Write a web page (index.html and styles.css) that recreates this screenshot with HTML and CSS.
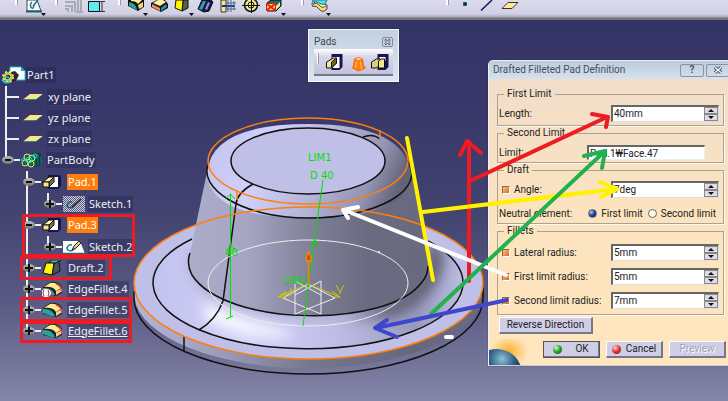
FILE: index.html
```html
<!DOCTYPE html>
<html lang="en">
<head>
    <meta charset="UTF-8">
    <meta name="viewport" content="width=device-width, initial-scale=1.0">
    <title>Part1 - Drafted Filleted Pad</title>
    <link rel="stylesheet" href="styles.css">
</head>
<body>

    <!-- shared icons -->
    <svg class="defs" aria-hidden="true">
        <symbol id="i-plane" viewBox="0 0 22 16">
            <path d="M1 10.5 L8 5 H21 L14 10.5 Z" fill="#f5e88a"/>
            <path d="M1 11 H14 L21 5.500" fill="none" stroke="#1d5a6b" stroke-width="1"/>
        </symbol>
        <symbol id="i-body" viewBox="0 0 22 16">
            <path d="M11 1 L19 1 L22 6 L19 13 L14 15 L8 12 Z" fill="#0a3a3c"/>
            <path d="M14 2 V14 M17 2 V13 M20 4 V11" stroke="#0b8f83" stroke-width="1"/>
            <circle cx="8" cy="8" r="6" fill="#0c6470"/>
            <g fill="none" stroke="#f4ee2c" stroke-width="1">
                <circle cx="6" cy="5" r="3"/><circle cx="11" cy="6" r="3"/>
                <circle cx="4" cy="11" r="3"/><circle cx="10" cy="12" r="3"/>
            </g>
            <g fill="none" stroke="#18d7e0" stroke-width="1">
                <circle cx="8" cy="8" r="3"/><circle cx="14" cy="4" r="2"/><circle cx="2" cy="8" r="1.500"/>
            </g>
        </symbol>
        <symbol id="i-pad" viewBox="0 0 22 16">
            <path d="M6 1 H17 L19 2 V12 L16 15 H6 Z" fill="#17144f"/>
            <path d="M7 3 H16 V13 H7 Z" fill="#fff"/>
            <path d="M1 8 L7 3 H12 L7 8 Z" fill="#fbf3a5" stroke="#111" stroke-width="1"/>
            <path d="M7 8 L12 3 V8 L7 13 Z" fill="#777239" stroke="#111" stroke-width="1"/>
            <path d="M1 8 H7 V13 H1 Z" fill="#f3e88c" stroke="#111" stroke-width="1"/>
        </symbol>
        <symbol id="i-sketch" viewBox="0 0 22 16">
            <path d="M0 2 H17 L22 15 H0 Z" fill="#fff"/>
            <path d="M0 14.500 H22" stroke="#1b6f7b" stroke-width="1.500"/>
            <path d="M9 6 C5 5 3 9 5 11 C8 13 12 11 12 8" fill="none" stroke="#1b7f86" stroke-width="1.500"/>
            <path d="M9 11 L11 7 L16 2 L18 4 L13 9 Z" fill="#d9d38a" stroke="#222"/>
        </symbol>
        <symbol id="i-sketch-hidden" viewBox="0 0 22 16">
            <path d="M0 0 H22 V16 H0 Z" fill="#5d5d86"/>
            <path d="M0 .5 H22 M0 2.500 H22 M0 4.500 H22 M0 6.500 H22 M0 8.500 H22 M0 10.500 H22 M0 12.500 H22 M0 14.500 H22" stroke="#c9c9d8" stroke-dasharray="1 1"/>
            <path d="M1 1.500 H22 M1 3.500 H22 M1 5.500 H22 M1 7.500 H22 M1 9.500 H22 M1 11.500 H22 M1 13.500 H22 M1 15.500 H22" stroke="#c9c9d8" stroke-dasharray="1 1"/>
            <path d="M9 6 C5 5 3 9 5 11 C8 13 12 11 12 8" fill="none" stroke="#2a5f70" stroke-width="1.500"/>
            <path d="M9 11 L18 3" stroke="#333" stroke-width="2"/>
        </symbol>
        <symbol id="i-draft" viewBox="0 0 22 16">
            <path d="M6 3 L10 0 H19 L16 3 Z" fill="#39c7d3" stroke="#111"/>
            <path d="M12 4 L17 1 L18 11 L10 15 Z" fill="#4d5260" stroke="#111"/>
            <path d="M4 3 H12 L10 15 L1 13 Z" fill="#fff500" stroke="#111"/>
        </symbol>
        <symbol id="i-fillet" viewBox="0 0 22 16">
            <path d="M1 6 L8 1 Q17 0 20 6 V12 L14 15 L1 12 Z" fill="#222"/>
            <path d="M1 7 Q10 6 13 14 L9 14 L1 11 Z" fill="#2aa39e"/>
            <path d="M2 6 L8 2 Q15 1 19 7 L14 10 Q11 5 2 6 Z" fill="#ffe991"/>
            <path d="M14 3 Q19 4 20 11" fill="none" stroke="#e0503c" stroke-width="1.500"/>
            <path d="M14 10 L19 8 V11 L14 14 Z" fill="#f3c98c"/>
        </symbol>
    </svg>

    <header class="toolbar">
        <div class="tools">
            <button type="button" aria-label="Sketcher">
                <svg viewBox="0 0 23 17"><path d="M4 0 H14 L18 11 H4 Z" fill="#fff" stroke="#445" /><path d="M3 11.500 H19" stroke="#17606f" stroke-width="2"/><path d="M9 2 C6 5 8 9 10 8 L12 3 M10 6 L15 0" fill="none" stroke="#177c88" stroke-width="1.500"/><path d="M18 13 h5 l-2.500 3 z" fill="#111"/></svg>
            </button>
        </div>
        <div class="tools">
            <button type="button" aria-label="Exit workbench">
                <svg viewBox="0 0 23 17"><path d="M2 2 H12 V12 M2 6 H9 V12 M2 9 H5 V12 M15 0 V12 M18 0 V12 M13 12 H20" fill="none" stroke="#aaa9b6" stroke-width="2"/></svg>
            </button>
            <button type="button" aria-label="Constraint">
                <svg viewBox="0 0 23 17"><path d="M2.500 1.500 H13.500 V11.500 H2.500 Z" fill="#5fe9f2" stroke="#111"/><path d="M16 1 V12 M14 1.500 H19 M14 11.500 H19" stroke="#333"/></svg>
            </button>
        </div>
        <div class="tools">
            <button type="button" aria-label="Edge fillet">
                <svg viewBox="0 0 23 17"><path d="M2 0 H18 V7 L12 11 L2 6 Z" fill="#111"/><path d="M3 2 Q10 3 11 10 L3 6 Z" fill="#2aa39e"/><path d="M5 0 H16 L12 4 Q10 1 5 1 Z" fill="#fff0a0"/><path d="M12 5 L17 2 V7 L13 9 Z" fill="#f7d27c"/><path d="M17 13 h5 l-2.500 3 z" fill="#111"/></svg>
            </button>
            <button type="button" aria-label="Chamfer">
                <svg viewBox="0 0 23 17"><path d="M2 3 L8 0 H16 L19 4 V8 L12 12 L2 7 Z" fill="#111"/><path d="M3 4 L11 8 V11 L3 7 Z" fill="#f58a5c"/><path d="M4 3 L9 0 H14 L17 2 L11 6 Z" fill="#fff0a0"/><path d="M12 8 L17 4 L18 7 L12 11 Z" fill="#2d89b5"/></svg>
            </button>
            <button type="button" aria-label="Draft angle">
                <svg viewBox="0 0 23 17"><path d="M11 0 H16 V8 L10 11 Z" fill="#5a5f48" stroke="#111"/><path d="M4 0 H11 L10 11 L3 8 Z" fill="#fff500" stroke="#111"/><path d="M17 13 h5 l-2.500 3 z" fill="#111"/></svg>
            </button>
            <button type="button" aria-label="Shell">
                <svg viewBox="0 0 23 17"><path d="M3 9 L7 0 H16 L18 2 L14 11 L9 12 Z" fill="#17144f" stroke="#111"/><path d="M4 9 L8 1 H11 L7 10 Z" fill="#2aa3a8"/><path d="M10 9 L13 2 L15 3 L12 10 Z" fill="#8b90c8"/></svg>
            </button>
            <button type="button" aria-label="Thickness">
                <svg viewBox="0 0 23 17"><path d="M3 0 H8 V12 H3 Z" fill="#f3e88c" stroke="#333"/><path d="M4 6 H17" stroke="#1c2f8f" stroke-width="2"/><path d="M10 0 V12 M13 0 V12 M16 1 V10 M8 3 H18 M8 9 H18" stroke="#4b6f86"/></svg>
            </button>
            <button type="button" aria-label="Thread">
                <svg viewBox="0 0 23 17"><circle cx="10" cy="5" r="6.500" fill="#f3e88c" stroke="#111" stroke-width="1.500"/><circle cx="10" cy="5" r="3" fill="none" stroke="#111"/><path d="M1 5.500 H19 M10.500 0 V13" stroke="#111"/></svg>
            </button>
            <button type="button" aria-label="Remove face">
                <svg viewBox="0 0 23 17"><path d="M3 3 L7 0 H17 V6 L12 11 H3 Z" fill="#12706d" stroke="#111"/><path d="M2.500 3.500 H11.500 V10.500 H2.500 Z" fill="#ffe23a" stroke="#d22"/><path d="M3 4 L11 10 M11 4 L3 10" stroke="#e22020" stroke-width="2"/><path d="M12 6 L16 2 V6 L12 10Z" fill="#f3e88c"/><path d="M17 13 h5 l-2.500 3 z" fill="#111"/></svg>
            </button>
        </div>
        <div class="tools tools-surface">
            <button type="button" aria-label="Surface">
                <svg viewBox="0 0 23 17"><path d="M3 6 Q8 5 11 10 Q14 13 18 9 V5 L7 1 Z" fill="#f3d873" stroke="#444"/><path d="M2 4 Q8 2 11 6 Q14 9 18 5" fill="#fff0a0" stroke="#555"/><path d="M4 0 H18 L16 4 Q13 5 10 3 Q7 1 3 2 Z" fill="#54e0f4" stroke="#257b8c"/><path d="M17 13 h5 l-2.500 3 z" fill="#111"/></svg>
            </button>
        </div>
        <div class="tools tools-reference">
            <button type="button" aria-label="Point">
                <svg viewBox="0 0 23 17"><path d="M9.500 2.500 H12.500 V5.500 H9.500 Z" fill="#1a1a6a" stroke="#16606e"/></svg>
            </button>
            <button type="button" aria-label="Line">
                <svg viewBox="0 0 23 17"><path d="M4 10.500 L15 0" stroke="#17145f" stroke-width="1.500"/></svg>
            </button>
            <button type="button" aria-label="Plane">
                <svg viewBox="0 0 23 17"><path d="M2 8.500 L8 2.500 H18 L12 8.500 Z" fill="#ffe991" stroke="#333"/></svg>
            </button>
        </div>
    </header>

    <main class="workspace">

        <svg class="model" viewBox="0 20 728 381" role="img" aria-label="Filleted pad model">
            <defs>
                <linearGradient id="side" x1="0" x2="1">
                    <stop offset="0" stop-color="#b4b4d6"/>
                    <stop offset=".25" stop-color="#9c9cba"/>
                    <stop offset=".5" stop-color="#77778f"/>
                    <stop offset=".8" stop-color="#66667c"/>
                    <stop offset="1" stop-color="#6a6a80"/>
                </linearGradient>
                <linearGradient id="cone" x1="0" x2="1">
                    <stop offset="0" stop-color="#adadca"/>
                    <stop offset=".25" stop-color="#a5a5c3"/>
                    <stop offset=".5" stop-color="#81819a"/>
                    <stop offset=".75" stop-color="#6a6a80"/>
                    <stop offset="1" stop-color="#69697f"/>
                </linearGradient>
                <linearGradient id="top-fillet" x1="0" x2="1" y1=".2" y2=".4">
                    <stop offset="0" stop-color="#c4c4ef"/>
                    <stop offset=".3" stop-color="#d0d0fb"/>
                    <stop offset=".6" stop-color="#b4b4d8"/>
                    <stop offset=".85" stop-color="#9292b2"/>
                    <stop offset="1" stop-color="#626278"/>
                </linearGradient>
                <linearGradient id="base-fillet" x1="0" x2="1">
                    <stop offset="0" stop-color="#c2c2ee"/>
                    <stop offset=".3" stop-color="#d2d2fc"/>
                    <stop offset=".6" stop-color="#bdbde4"/>
                    <stop offset=".85" stop-color="#9a9abc"/>
                    <stop offset="1" stop-color="#bcbce4"/>
                </linearGradient>
                <filter id="soft" x="-30%" y="-50%" width="160%" height="200%"><feGaussianBlur stdDeviation="7"/></filter>
                <clipPath id="fillet-clip"><ellipse cx="308" cy="283" rx="155" ry="66"/></clipPath>
            </defs>

            <!-- base flange -->
            <path d="M134 283 V298 A175 76 0 0 0 483 298 V283 Z" fill="url(#side)"/>
            <ellipse cx="308.500" cy="283" rx="174.500" ry="76" fill="#bfbfe8"/>
            <ellipse cx="308" cy="283" rx="155" ry="66" fill="url(#base-fillet)"/>
            <g clip-path="url(#fillet-clip)">
                <path d="M345 318 Q420 300 430 240 L444 252 Q446 292 394 318 Z" fill="#5d5d72" filter="url(#soft)"/>
                <path d="M208 304 Q240 324 290 334 Q240 334 208 316 Z" fill="#fff" stroke="#fff" stroke-width="5" filter="url(#soft)"/>
                <path d="M190 270 Q206 318 308 317 T430 266 L426 250 H190 Z" fill="#8c8ca8" filter="url(#soft)" opacity=".5"/>
            </g>

            <!-- cone -->
            <path d="M207 172 L189 258 Q186 268 195 278 Q225 315 308 316 Q392 315 420 284 Q430 272 428 258 L411 172 Z" fill="url(#cone)"/>
            <path d="M207 172 Q212 124 308 124 Q406 124 411 175 Q409 218 308 218 Q208 218 207 172 Z" fill="url(#top-fillet)"/>
            <ellipse cx="308" cy="161" rx="77" ry="33" fill="#bfbfe8"/>

            <g class="edge">
                <path d="M134 291 V298 A174.500 76 0 0 0 483 298 V288"/>
                <path d="M192 239 A155 66 0 1 0 428 241"/>
                <path d="M190 253 Q186 264 192 275 C226 328 390 328 422 282 Q428 275 428 266"/>
                <ellipse cx="308" cy="161" rx="77" ry="33"/>
                <path d="M209 162 C196 188 242 218 308 218 C376 218 428 190 407 160"/>
                <path d="M253 184 Q237 193 236 204 L223 301 Q216 320 199 330 M184 336 V351 M363 137 Q373 133 380 139"/>
            </g>
            <g class="limit">
                <path d="M134 283 A174.500 76 0 0 0 483 283 A174.500 76 0 0 0 134 283"/>
                <ellipse cx="308" cy="161" rx="100" ry="43"/>
                <path d="M237 190 V200 M380 130 V139"/>
            </g>
            <ellipse class="profile" cx="308" cy="283" rx="100" ry="43"/>
            <circle cx="379" cy="252" r="1" fill="#fff"/>

            <path class="profile" d="M295 284 V314 L335 298 L308 284 L283 298 L321 314 V281 L295 295 M295 281 L321 295"/>
            <g class="axis">
                <path d="M278 297 L308 284 L340 297 M278 297 l7 -5 M278 297 l8 0 M340 297 l-8 -6 M340 297 l-8 0"/>
                <path d="M285 291 V298 M291 288 V296 M285 295 L291 292 M336 285 L340 292 L344 285 M340 292 V294"/>
            </g>
            <g class="dimension">
                <path d="M230.500 194 V317 M225 199 L230.500 194 L235 199 M226 319 L233 316 M226 251 L230.500 246 L235 250"/>
                <path d="M323 180 L314 243 L303 326 M310 248 L315 240 L318 247"/>
            </g>
            <g class="dimension-text">
                <text x="225" y="256">40</text>
                <text x="308" y="161">LIM1</text>
                <text x="310" y="179">D 40</text>
                <text x="283" y="284">LIM2</text>
            </g>
            <path d="M308.500 283 V260 M306.500 261 V257 L308.500 252 L311 257 V261 Z" fill="#a35b20" stroke="#ff7f00" stroke-width="1.500"/>
        </svg>

        <nav class="tree" aria-label="Specification tree">
            <div class="node node-root">
                <svg class="root-icon" viewBox="0 0 25 18"><path d="M9 1 H20 L24 5 V14 H9 Z" fill="#fff" stroke="#18c5d0"/><path d="M20 1 V5 H24 Z" fill="#18a5b0"/><path d="M10 6 L14 5 L18 9 L15 15 L9 16 Z" fill="#2a2a2a"/><circle cx="7" cy="11" r="5" fill="#b3a63a" stroke="#f4e67a" stroke-width="2" stroke-dasharray="2 2"/><circle cx="7" cy="11" r="3" fill="#38380e" stroke="#f4e67a"/><path d="M1 14 Q4 18 9 16 M2 12 Q6 9 9 13" fill="none" stroke="#18d7e0" stroke-width="1.500"/></svg>
                <span class="label">Part1</span>
            </div>
            <ul>
                <li><div class="node"><span class="twig"></span><svg class="icon"><use href="#i-plane"/></svg><span class="label">xy plane</span></div></li>
                <li><div class="node"><span class="twig"></span><svg class="icon"><use href="#i-plane"/></svg><span class="label">yz plane</span></div></li>
                <li><div class="node"><span class="twig"></span><svg class="icon"><use href="#i-plane"/></svg><span class="label">zx plane</span></div></li>
                <li>
                    <div class="node node-open"><button type="button" class="knob minus" aria-label="Collapse PartBody"></button><svg class="icon"><use href="#i-body"/></svg><span class="label">PartBody</span></div>
                    <ul>
                        <li>
                            <div class="node node-open"><button type="button" class="knob minus" aria-label="Collapse Pad.1"></button><svg class="icon"><use href="#i-pad"/></svg><span class="label selected">Pad.1</span></div>
                            <ul>
                                <li><div class="node"><button type="button" class="knob plus" aria-label="Expand Sketch.1"></button><svg class="icon"><use href="#i-sketch-hidden"/></svg><span class="label">Sketch.1</span></div></li>
                            </ul>
                        </li>
                        <li>
                            <div class="node node-open"><button type="button" class="knob minus" aria-label="Collapse Pad.3"></button><svg class="icon"><use href="#i-pad"/></svg><span class="label selected">Pad.3</span></div>
                            <ul>
                                <li><div class="node"><button type="button" class="knob plus" aria-label="Expand Sketch.2"></button><svg class="icon"><use href="#i-sketch"/></svg><span class="label">Sketch.2</span></div></li>
                            </ul>
                        </li>
                        <li><div class="node"><button type="button" class="knob plus" aria-label="Expand Draft.2"></button><svg class="icon"><use href="#i-draft"/></svg><span class="label">Draft.2</span></div></li>
                        <li><div class="node"><button type="button" class="knob plus" aria-label="Expand EdgeFillet.4"></button><svg class="icon"><use href="#i-fillet"/><ellipse cx="4" cy="12" rx="5" ry="4" fill="#fff"/><path d="M2 9 Q0 12 2 15 M6 9 Q8 12 6 15" fill="none" stroke="#d22" stroke-width="1"/></svg><span class="label">EdgeFillet.4</span></div></li>
                        <li><div class="node"><button type="button" class="knob plus" aria-label="Expand EdgeFillet.5"></button><svg class="icon"><use href="#i-fillet"/></svg><span class="label">EdgeFillet.5</span></div></li>
                        <li><div class="node"><button type="button" class="knob plus" aria-label="Expand EdgeFillet.6"></button><svg class="icon"><use href="#i-fillet"/></svg><span class="label current">EdgeFillet.6</span></div></li>
                    </ul>
                </li>
            </ul>
        </nav>

        <section class="pads">
            <div class="pads-title">
                <span>Pads</span>
                <button type="button" aria-label="Close Pads"><svg viewBox="0 0 11 10"><path d="M3 2.500 L8 7.500 M8 2.500 L3 7.500" stroke="#445" stroke-width="2"/><path d="M3.500 3 L7.500 7 M7.500 3 L3.500 7" stroke="#fff" stroke-width="1"/></svg></button>
            </div>
            <div class="pads-tools">
                <button type="button" aria-label="Pad"><svg viewBox="0 0 22 20"><path d="M7 1 H18 V14 L15 17 H7 Z" fill="#17144f"/><path d="M8 4 H15 V15 H8 Z" fill="#fff"/><path d="M2 9 L9 5 H12 V10 L7 15 H2 Z" fill="#f3e88c" stroke="#111"/><path d="M7 9 L12 5 V10 L7 15 Z" fill="#6d6835" stroke="#111"/></svg></button>
                <button type="button" aria-label="Drafted Filleted Pad"><svg viewBox="0 0 22 20"><path d="M7 6 Q11 3 15 6 L16 13 L18 15 L11 18 L5 15 L6 13 Z" fill="#ff7f0e" stroke="#f26a00"/><path d="M8 6 Q11 4 14 6 Q11 8 8 6 Z" fill="#ffd9a8"/><path d="M9 9 L8 15 M13 9 L14 16" stroke="#ffc48a"/></svg></button>
                <button type="button" aria-label="Multi-Pad"><svg viewBox="0 0 22 20"><path d="M7 1 H18 V14 L15 17 H7 Z" fill="#17144f"/><path d="M9 4 H15 V8 H9 Z" fill="#fff"/><path d="M1 9 L6 6 H10 V11 L6 15 H1 Z" fill="#d9d080" stroke="#111"/><path d="M8 8 L11 6 H14 V15 H8 Z" fill="#f3e88c" stroke="#111"/></svg></button>
            </div>
        </section>

        <form class="dialog">
            <div class="titlebar">
                <h1>Drafted Filleted Pad Definition</h1>
                <button type="button" aria-label="Help">?</button>
                <button type="button" aria-label="Close"><svg viewBox="0 0 12 10"><path d="M2 1.500 L10 8.500 M10 1.500 L2 8.500" stroke="#4a5568" stroke-width="4"/><path d="M2 1.500 L10 8.500 M10 1.500 L2 8.500" stroke="#fff" stroke-width="1.500"/></svg></button>
            </div>
            <div class="dialog-body">
                <fieldset>
                    <legend>First Limit</legend>
                    <div class="field">
                        <label for="length">Length:</label>
                        <span class="spinner"><input type="text" id="length" value="40mm"><span class="arrows"><button type="button" class="up" aria-label="Increase length"></button><button type="button" class="down" aria-label="Decrease length"></button></span></span>
                    </div>
                </fieldset>
                <fieldset class="tight">
                    <legend>Second Limit</legend>
                    <div class="field">
                        <label for="limit">Limit:</label>
                        <input type="text" id="limit" class="limit-box" value="Pad.1₩Face.47">
                    </div>
                </fieldset>
                <fieldset class="tight">
                    <legend>Draft</legend>
                    <div class="field">
                        <input type="checkbox" id="use-angle" checked aria-label="Use angle">
                        <label for="angle">Angle:</label>
                        <span class="spinner"><input type="text" id="angle" value="7deg"><span class="arrows"><button type="button" class="up" aria-label="Increase angle"></button><button type="button" class="down" aria-label="Decrease angle"></button></span></span>
                    </div>
                    <div class="field neutral">
                        <span>Neutral element:</span>
                        <input type="radio" name="neutral" id="neutral-first" checked><label for="neutral-first">First limit</label>
                        <input type="radio" name="neutral" id="neutral-second"><label for="neutral-second">Second limit</label>
                    </div>
                </fieldset>
                <fieldset class="fillets">
                    <legend>Fillets</legend>
                    <div class="field">
                        <input type="checkbox" id="use-lateral" checked aria-label="Use lateral radius">
                        <label for="lateral">Lateral radius:</label>
                        <span class="spinner"><input type="text" id="lateral" value="5mm"><span class="arrows"><button type="button" class="up" aria-label="Increase lateral radius"></button><button type="button" class="down" aria-label="Decrease lateral radius"></button></span></span>
                    </div>
                    <div class="field">
                        <input type="checkbox" id="use-first" checked aria-label="Use first limit radius">
                        <label for="first-radius">First limit radius:</label>
                        <span class="spinner"><input type="text" id="first-radius" value="5mm"><span class="arrows"><button type="button" class="up" aria-label="Increase first limit radius"></button><button type="button" class="down" aria-label="Decrease first limit radius"></button></span></span>
                    </div>
                    <div class="field">
                        <input type="checkbox" id="use-second" checked aria-label="Use second limit radius">
                        <label for="second-radius">Second limit radius:</label>
                        <span class="spinner"><input type="text" id="second-radius" value="7mm"><span class="arrows"><button type="button" class="up" aria-label="Increase second limit radius"></button><button type="button" class="down" aria-label="Decrease second limit radius"></button></span></span>
                    </div>
                </fieldset>
                <button type="button" class="btn reverse">Reverse Direction</button>
            </div>
            <div class="dialog-footer">
                <svg class="planet" viewBox="0 0 40 26" aria-hidden="true">
                    <defs>
                        <radialGradient id="glow"><stop offset="0" stop-color="#ffb02e"/><stop offset="1" stop-color="#ffb02e" stop-opacity="0"/></radialGradient>
                        <radialGradient id="globe" cx=".6" cy=".2" r=".5"><stop offset="0" stop-color="#8fc0d6"/><stop offset=".5" stop-color="#2f5f86"/><stop offset="1" stop-color="#0c1a33"/></radialGradient>
                    </defs>
                    <ellipse cx="20" cy="12" rx="19" ry="15" fill="url(#glow)"/>
                    <circle cx="8" cy="35" r="25" fill="url(#globe)"/>
                </svg>
                <button type="submit" class="btn default"><span class="lamp green"></span>OK</button>
                <button type="button" class="btn"><span class="lamp red"></span>Cancel</button>
                <button type="button" class="btn" disabled>Preview</button>
            </div>
        </form>

        <!-- marker notes linking the dialog to the model -->
        <svg class="notes" viewBox="0 20 728 381" aria-hidden="true">
            <g class="red">
                <path d="M23.500 215.500 H133.500 V255.500 H23.500 Z M21.500 257.500 H110.500 V278.500 H21.500 Z M21.500 298.500 H130.500 V320.500 H21.500 Z M21.500 322.500 H130.500 V341.500 H21.500 Z"/>
                <path class="arrow" d="M469 281 V142 M460 155 L467 141 L481 153 M470 181 L607 117 M592 114 L608 117 L606 127"/>
            </g>
            <path class="arrow yellow" d="M407 138 L433 280 M423 212 L616 189 M600 182 L617 189 L601 197"/>
            <path class="arrow white" d="M506 275 L344 210 M358 207 L343 210 L348 218 M446 337 H452"/>
            <path class="arrow green" d="M431 314 L605 151 M584 156 L605 151 L602 168"/>
            <path class="arrow blue" d="M507 300 L376 328 M387 320 L375 328 L397 337"/>
        </svg>
    </main>

</body>
</html>
```

FILE: styles.css
```css
* {
    box-sizing: border-box;
}

body {
    margin: 0;
    min-height: 100vh;
    display: flex;
    flex-direction: column;
    overflow: hidden;
    font-family: "Noto Sans", "Open Sans", sans-serif;
    font-size: 11px;
    line-height: 12px;
    color: #222;
}

button {
    font: inherit;
    padding: 0;
    margin: 0;
    border: none;
    background: none;
}

svg {
    display: block;
}

.defs {
    position: absolute;
    width: 0;
    height: 0;
}

/* toolbar */
.toolbar {
    display: flex;
    height: 20px;
    padding-left: 15px;
    background: linear-gradient(#dcdbec, #d0cfe4 14px, #a9a8bb 17px, #77777a 18px);
}

.tools {
    display: flex;
    margin-right: 9px;
}

.tools::before {
    content: "";
    width: 2px;
    height: 5px;
    margin-right: 5px;
    background: #fff;
    border-right: 1px solid #99a;
}

.tools button,
.tools svg {
    width: 23px;
    height: 17px;
}

.tools-surface {
    margin-left: 5px;
}

.tools-reference {
    margin-left: 105px;
}

/* 3D view */
.workspace {
    position: relative;
    flex: 1;
    overflow: hidden;
    background: linear-gradient(#333366, #38386a 25%, #434371 50%, #5b5b85 75%, #8686a9);
}

.model,
.notes {
    position: absolute;
    top: 0;
    left: 0;
    width: 728px;
    height: 381px;
    fill: none;
}

.notes {
    pointer-events: none;
}

.edge {
    stroke: #111;
    stroke-width: 1.5px;
    fill: none;
}

.limit {
    stroke: #ff7f0e;
    stroke-width: 1.5px;
    fill: none;
}

.profile {
    stroke: #eee;
    fill: none;
}

.axis {
    stroke: #cccc00;
}

.dimension {
    stroke: #00e000;
}

.dimension-text {
    fill: #00e000;
    font-family: "DejaVu Sans", sans-serif;
    font-size: 10px;
}

.arrow {
    stroke-width: 4px;
    stroke-linecap: round;
    stroke-linejoin: round;
}

.red {
    stroke: #ed1c24;
    stroke-width: 3px;
}

.yellow {
    stroke: #fff200;
}

.white {
    stroke: #fff;
}

.green {
    stroke: #22b14c;
}

.blue {
    stroke: #3f48cc;
}

/* specification tree */
.tree {
    position: relative;
    width: 140px;
    padding-top: 44px;
    color: #eee;
}

.tree ul {
    margin: 0;
    padding: 0;
    list-style: none;
}

.tree li {
    padding-left: 2px;
    background: linear-gradient(#eee, #eee) 5px 0 / 2px 100% no-repeat;
}

.tree li:last-child {
    background-size: 2px 10px;
}

.tree li ul {
    margin-left: 19px;
}

.node {
    display: flex;
    align-items: center;
    height: 21px;
    white-space: nowrap;
}

.node-root {
    height: 22px;
    padding-left: 1px;
}

.node-open {
    height: 22px;
    padding-bottom: 1px;
}

.root-icon {
    width: 25px;
    height: 18px;
}

.twig {
    width: 12px;
    height: 2px;
    margin: 0 3px 0 5px;
    background: #eee;
}

.knob {
    position: relative;
    width: 12px;
    height: 8px;
    margin-right: 7px;
    border-radius: 50%;
    background:
        linear-gradient(#111, #111) center / 6px 2px no-repeat,
        linear-gradient(#bbb, #777);
}

.plus {
    background:
        linear-gradient(#111, #111) center / 8px 2px no-repeat,
        linear-gradient(#111, #111) center / 2px 8px no-repeat,
        linear-gradient(#bbb, #777);
}

.knob::after {
    content: "";
    position: absolute;
    top: 3px;
    left: 12px;
    width: 6px;
    height: 2px;
    background: #eee;
}

.icon {
    width: 22px;
    height: 16px;
}

.label {
    margin-left: 3px;
    padding: 2px 1px;
    background: rgba(40, 40, 85, 0.45);
}

.node-root .label {
    margin-left: 0;
}

.selected {
    color: #fff;
    background: #ff7f0e;
}

.current {
    text-decoration: underline;
}

/* Pads toolbar window */
.pads {
    position: absolute;
    top: 9px;
    left: 308px;
    width: 91px;
    padding: 5px;
    border: 1px solid #f4f8fc;
    background: linear-gradient(#c3d0de, #dbe6f1);
    box-shadow: 0 0 1px #223;
}

.pads-title {
    display: flex;
    justify-content: space-between;
    align-items: center;
    height: 14px;
    font-family: Roboto, sans-serif;
    font-size: 10px;
    color: #445;
}

.pads-title button,
.pads-title svg {
    width: 11px;
    height: 10px;
}

.pads-title button {
    outline: 1px solid #7d8a9a;
    outline-offset: -1px;
    border-radius: 2px;
}

.pads-tools {
    display: flex;
    height: 27px;
    padding-top: 4px;
    background: linear-gradient(#fff, #d6d5ea 8px, #c3c2dc);
    border-bottom: 2px solid #77778c;
}

.pads-tools::before {
    content: "";
    width: 2px;
    height: 11px;
    margin: 0 5px 0 3px;
    background: #fff;
    border-right: 1px solid #99a;
}

.pads-tools button,
.pads-tools svg {
    width: 23px;
    height: 20px;
}

/* definition dialog */
.dialog {
    position: absolute;
    top: 40px;
    left: 488px;
    width: 244px;
    border: 1px solid #eef3f8;
    border-bottom-color: #ccd;
    border-radius: 5px 5px 0 0;
    background: linear-gradient(#f0dccb, #fbe3c0 45%, #ffe6bd);
    box-shadow: 0 0 1px #111;
    font-family: Roboto, sans-serif;
    font-size: 10px;
    overflow: hidden;
}

.titlebar {
    display: flex;
    align-items: center;
    gap: 2px;
    height: 18px;
    padding: 0 1px 0 4px;
    background: linear-gradient(#bccbdb, #d5e2ef);
}

.titlebar h1 {
    flex: 1;
    margin: 0;
    font-size: 10px;
    font-weight: normal;
    color: #445060;
    white-space: nowrap;
}

.titlebar button {
    display: flex;
    align-items: center;
    justify-content: center;
    width: 24px;
    height: 13px;
    border: 1px solid #8795a6;
    border-radius: 2px;
    font-weight: bold;
    color: #4a5568;
}

.titlebar svg {
    width: 10px;
    height: 8px;
}

.dialog-body {
    padding: 9px 7px 0 8px;
}

fieldset {
    min-width: 0;
    margin: 0 0 1px;
    padding: 5px 4px 3px 1px;
    border: 1px solid #a9a396;
    box-shadow: 1px 1px 0 #fff9ec;
}

.tight {
    padding-bottom: 1px;
}

.fillets {
    padding-top: 7px;
    padding-bottom: 5px;
}

legend {
    margin-left: 5px;
    padding: 0 3px;
    height: 12px;
}

.field {
    display: flex;
    align-items: center;
    height: 17px;
    white-space: nowrap;
}

.field + .field {
    margin-top: 7px;
}

.field input {
    flex: none;
}

.field input[type="text"] {
    min-width: 0;
    margin: 0;
    padding: 0 1px;
    border: none;
    background: #fff;
    font: inherit;
    color: #222;
}

.spinner {
    display: flex;
    width: 108px;
    height: 17px;
    margin-left: auto;
    border: 1px solid #666;
    border-width: 2px 1px 1px 2px;
    border-right-color: #ddd;
    border-bottom-color: #ddd;
}

.field .spinner input {
    flex: 1;
}

.field input.limit-box[type="text"] {
    width: 118px;
    height: 15px;
    margin-left: auto;
    margin-right: 14px;
    border: 1px solid #eee;
    border-top: 2px solid #666;
    border-left: 2px solid #666;
}

.arrows {
    display: flex;
    flex-direction: column;
    width: 14px;
}

.arrows button {
    flex: 1;
    border: 1px solid #888;
    background-color: #dddce8;
}

.up::before,
.down::before {
    content: "";
    display: block;
    width: 6px;
    height: 3px;
    margin: 0 auto;
    background: #111;
    clip-path: polygon(50% 0, 100% 100%, 0 100%);
}

.down::before {
    clip-path: polygon(0 0, 100% 0, 50% 100%);
}

input[type="checkbox"] {
    appearance: none;
    width: 8px;
    height: 8px;
    margin: 0 4px 0 3px;
    border: 1px solid #8a6a4a;
    border-right-color: #fff;
    border-bottom-color: #fff;
    background: linear-gradient(135deg, #ffc08a, #d9661c);
}

input[type="radio"] {
    appearance: none;
    width: 9px;
    height: 9px;
    margin: 0 4px 0 0;
    border: 1px solid #666;
    border-radius: 50%;
    background: #fffbe6;
}

input[type="radio"]:checked {
    background: radial-gradient(circle at 30% 30%, #b8d0f5, #1c3f95 50%, #0a1d55);
}

.neutral span {
    flex: 1;
}

.neutral label {
    margin-right: 5px;
}

.neutral label:last-child {
    margin-right: 3px;
}

.btn {
    display: flex;
    align-items: center;
    justify-content: center;
    width: 57px;
    height: 17px;
    border: 1px solid #fff;
    border-right: 2px solid #77778c;
    border-bottom: 2px solid #77778c;
    background: #cfcee6;
    color: #222;
}

.btn:disabled {
    color: #a3a3b5;
    text-shadow: 1px 1px 0 #fff;
}

.default {
    outline: 1px solid #555;
    outline-offset: -1px;
}

.reverse {
    width: 94px;
    margin: 2px 0 0 2px;
}

.dialog-footer {
    display: flex;
    justify-content: flex-end;
    gap: 6px;
    height: 31px;
    padding: 7px 5px 0 0;
}

.planet {
    width: 40px;
    height: 26px;
    margin: -2px auto 0 0;
}

.lamp {
    width: 9px;
    height: 9px;
    margin-right: 5px;
    border-radius: 50%;
}

.default .lamp {
    margin-right: 13px;
}

.lamp.green {
    background: radial-gradient(circle at 35% 30%, #d5ffd0, #20a020 50%, #0a5a0a);
}

.lamp.red {
    background: radial-gradient(circle at 35% 30%, #ffd5d0, #e03030 50%, #801010);
}
```
